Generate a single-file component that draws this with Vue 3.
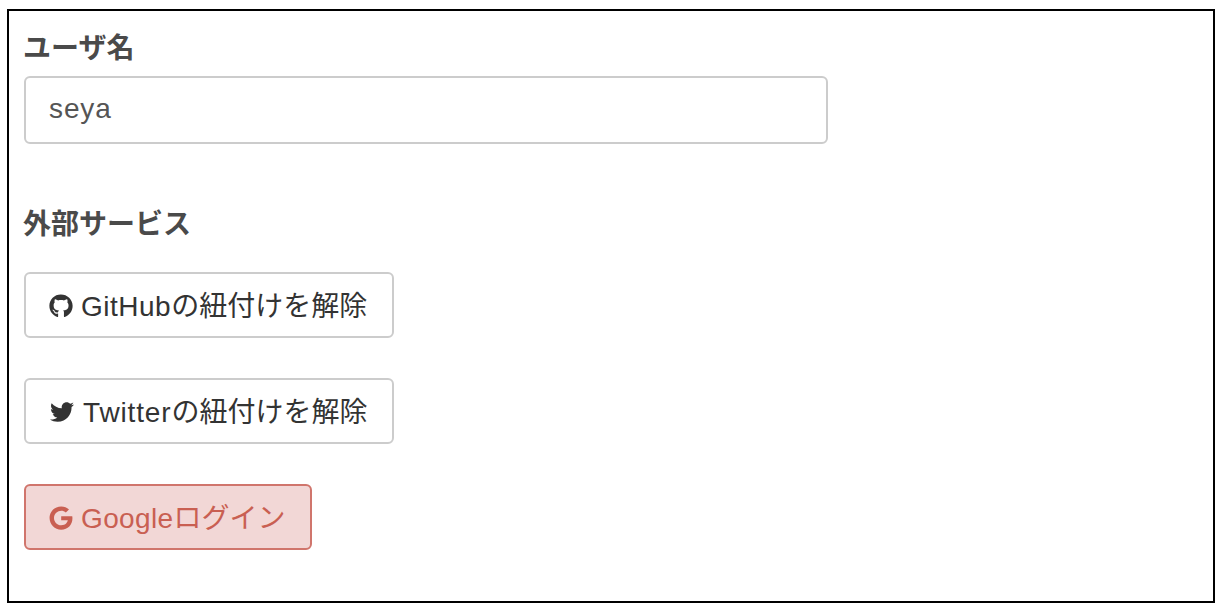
<script setup>
const github = "M165.9 397.4c0 2-2.3 3.6-5.2 3.6-3.3 0-5.6-1.6-5.6-3.6 0-2 2.3-3.6 5.2-3.6 3-.3 5.6 1.3 5.6 3.6zm-31.1-4.5c-.7 2 1.3 4.3 4.3 4.9 2.6 1 5.6 0 6.2-2s-1.3-4.3-4.3-5.2c-2.6-.7-5.5.3-6.2 2.3zm44.2-1.7c-2.9.7-4.9 2.6-4.6 4.9.3 2 2.9 3.3 5.9 2.6 2.9-.7 4.9-2.6 4.6-4.6-.3-1.9-3-3.2-5.9-2.9zM244.8 8C106.1 8 0 113.3 0 252c0 110.9 69.8 205.8 169.5 239.2 12.8 2.3 17.3-5.6 17.3-12.1 0-6.2-.3-40.4-.3-61.4 0 0-70 15-84.7-29.8 0 0-11.4-29.1-27.8-36.6 0 0-22.9-15.7 1.6-15.4 0 0 24.9 2 38.6 25.8 21.9 38.6 58.6 27.5 72.9 20.9 2.3-16 8.8-27.1 16-33.7-55.9-6.2-112.3-14.3-112.3-110.5 0-27.5 7.6-41.3 23.6-58.9-2.6-6.5-11.1-33.3 2.6-67.9 20.9-6.5 69 27 69 27 20-5.6 41.5-8.5 62.8-8.5s42.8 2.9 62.8 8.5c0 0 48.1-33.6 69-27 13.7 34.7 5.2 61.4 2.6 67.9 16 17.7 25.8 31.5 25.8 58.9 0 96.5-58.9 104.2-114.8 110.5 9.2 7.9 17 22.9 17 46.4 0 33.7-.3 75.4-.3 83.6 0 6.5 4.6 14.4 17.3 12.1C428.2 457.8 496 362.9 496 252 496 113.3 383.5 8 244.8 8zM97.2 352.9c-1.3 1-1 3.3.7 5.2 1.6 1.6 3.9 2.3 5.2 1 1.3-1 1-3.3-.7-5.2-1.6-1.6-3.9-2.3-5.2-1zm-10.8-8.1c-.7 1.3.3 2.9 2.3 3.9 1.6 1 3.6.7 4.3-.7.7-1.3-.3-2.9-2.3-3.9-2-.6-3.6-.3-4.3.7zm32.4 35.6c-1.6 1.3-1 4.3 1.3 6.2 2.3 2.3 5.2 2.6 6.5 1 1.3-1.3.7-4.3-1.3-6.2-2.2-2.3-5.2-2.6-6.5-1zm-11.4-14.7c-1.6 1-1.6 3.6 0 5.9 1.6 2.3 4.3 3.3 5.6 2.3 1.6-1.3 1.6-3.9 0-6.2-1.4-2.3-4-3.3-5.6-2z";
const twitter = "M459.37 151.716c.325 4.548.325 9.097.325 13.645 0 138.72-105.583 298.558-298.558 298.558-59.452 0-114.68-17.219-161.137-47.106 8.447.974 16.568 1.299 25.34 1.299 49.055 0 94.213-16.568 130.274-44.832-46.132-.975-84.792-31.188-98.112-72.772 6.498.974 12.995 1.624 19.818 1.624 9.421 0 18.843-1.3 27.614-3.573-48.081-9.747-84.143-51.98-84.143-102.985v-1.299c13.969 7.797 30.214 12.67 47.431 13.319-28.264-18.843-46.781-51.005-46.781-87.391 0-19.492 5.197-37.36 14.294-52.954 51.655 63.675 129.3 105.258 216.365 109.807-1.624-7.797-2.599-15.918-2.599-24.04 0-57.828 46.782-104.934 104.934-104.934 30.213 0 57.502 12.67 76.67 33.137 23.715-4.548 46.456-13.32 66.599-25.34-7.798 24.366-24.366 44.833-46.132 57.827 21.117-2.273 41.584-8.122 60.426-16.243-14.292 20.791-32.161 39.308-52.628 54.253z";
const google = "M488 261.8C488 403.3 391.1 504 248 504 110.8 504 0 393.2 0 256S110.8 8 248 8c66.8 0 123 24.5 166.3 64.9l-67.5 64.9C258.5 52.6 94.3 116.6 94.3 256c0 86.5 69.1 156.6 153.7 156.6 98.2 0 135-70.4 140.8-106.9H248v-85.3h236.1c2.3 12.7 3.9 24.9 3.9 41.4z";
</script>

<template>
  <div class="page">
    <div class="panel">
      <div class="label first">ユーザ名</div>
      <div class="input"><span class="value">seya</span></div>
      <div class="label second">外部サービス</div>
      <div class="actions">
        <button class="btn" type="button">
          <svg class="icon" viewBox="0 0 496 512" fill="currentColor"><path :d="github" /></svg>
          <span class="text"><span class="gh">GitHub</span>の紐付けを解除</span>
        </button>
        <button class="btn" type="button">
          <svg class="icon tw-icon" viewBox="0 0 512 512" fill="currentColor"><path :d="twitter" /></svg>
          <span class="text tw-text"><span class="tw">Twitter</span>の紐付けを解除</span>
        </button>
        <button class="btn danger" type="button">
          <svg class="icon" viewBox="0 0 488 512" fill="currentColor"><path :d="google" /></svg>
          <span class="text"><span class="go">Google</span>ログイン</span>
        </button>
      </div>
    </div>
  </div>
</template>

<style scoped>
.page {
  padding: 9px 7px 7px;
  box-sizing: border-box;
  font-family: "Liberation Sans", "Noto Sans CJK JP", sans-serif;
}
.panel {
  width: 1208px;
  height: 594px;
  box-sizing: border-box;
  border: 2px solid #000;
  padding: 22px 15px 0;
  background: #fff;
}
.label {
  margin-left: -1px;
  font-size: 28px;
  line-height: 32px;
  font-weight: 700;
  color: #4a4a4a;
}
.input {
  width: 804px;
  height: 68px;
  box-sizing: border-box;
  margin-top: 11px;
  border: 2px solid #ccc;
  border-radius: 6px;
  padding: 0 23px;
  display: flex;
  align-items: center;
  font-size: 28px;
  letter-spacing: 0.9px;
  color: #555;
}
.value {
  padding-bottom: 3px;
}
.second {
  margin-top: 65px;
}
.actions {
  margin-top: 31px;
  display: flex;
  flex-direction: column;
  align-items: flex-start;
  gap: 40px;
}
.btn {
  height: 66px;
  box-sizing: border-box;
  display: inline-flex;
  align-items: center;
  padding: 0 25px 0 23px;
  border: 2px solid #ccc;
  border-radius: 6px;
  background: #fff;
  color: #333;
  font-family: inherit;
  font-size: 28px;
}
.icon {
  width: 24px;
  height: 24px;
  margin-top: 2px;
  flex: none;
}
.tw-icon {
  margin-left: 1px;
}
.text {
  margin-left: 8px;
  padding-bottom: 2px;
}
.tw-text {
  margin-left: 9px;
}
.gh {
  letter-spacing: 0.5px;
}
.tw {
  letter-spacing: 0.85px;
}
.go {
  letter-spacing: 0.35px;
}
.danger {
  background: #f2d7d6;
  border-color: #d0756c;
  color: #c95f52;
}
</style>
